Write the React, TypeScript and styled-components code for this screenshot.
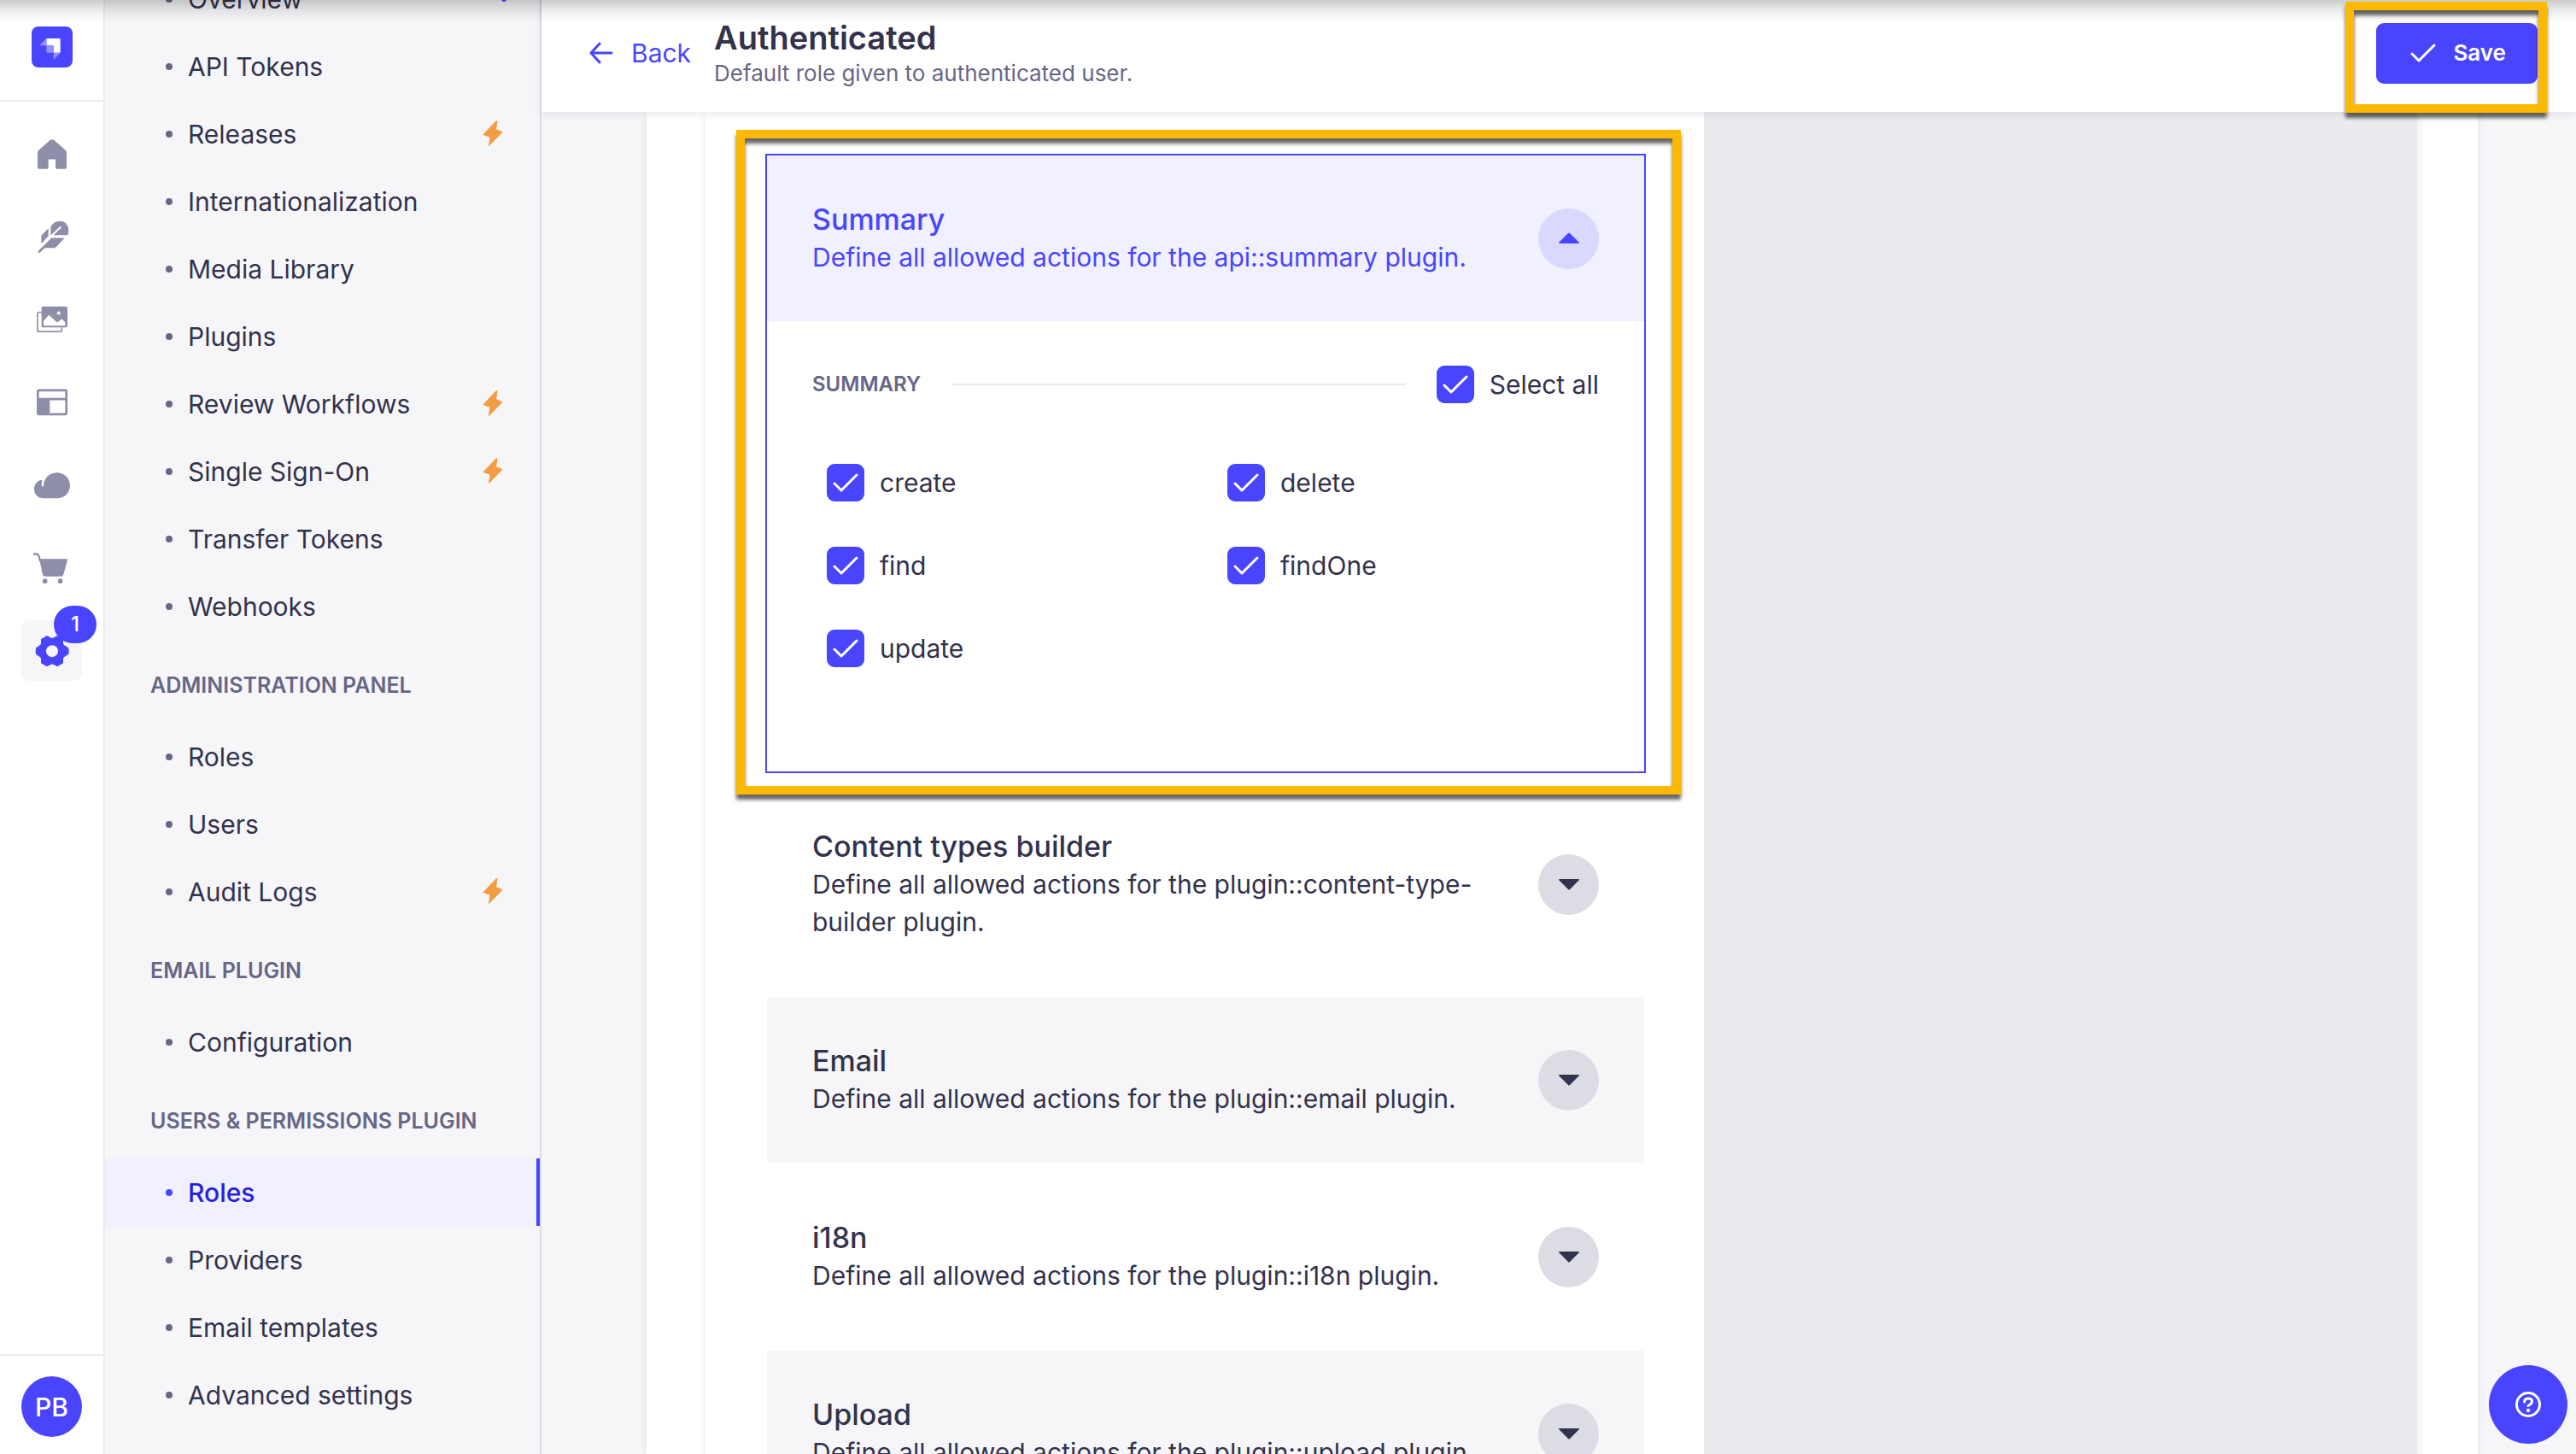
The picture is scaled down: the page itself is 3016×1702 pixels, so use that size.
import React, { useState } from 'react';
import styled, { createGlobalStyle, css } from 'styled-components';

const color = {
  primary: '#4945ff',
  primaryDark: '#271fe0',
  primarySoft: '#f0f0ff',
  primaryMuted: '#d9d8ff',
  ink: '#32324d',
  inkSoft: '#666687',
  icon: '#8e8ea9',
  line: '#eaeaef',
  lineDark: '#dcdce4',
  surface: '#f6f6f9',
  warning: '#f29d41',
  marker: '#fcb900',
};

const GlobalStyle = createGlobalStyle`
  *, *::before, *::after { box-sizing: border-box; }
  body {
    margin: 0;
    background: ${color.surface};
    color: ${color.ink};
    font-family: Inter, "Liberation Sans", sans-serif;
    font-size: 30px;
    line-height: 44px;
  }
  button, input { font: inherit; margin: 0; }
  h1, h2, h3, p, ul { margin: 0; padding: 0; }
  ul { list-style: none; }
  a { color: inherit; text-decoration: none; }
  svg { display: block; flex: none; }
`;

const Shell = styled.div`
  display: flex;
  height: 100vh;
  overflow: hidden;
`;

const TopShade = styled.div`
  position: fixed;
  inset: 0 0 auto 0;
  height: 26px;
  z-index: 1;
  pointer-events: none;
  background: linear-gradient(rgba(0, 0, 0, 0.2), rgba(0, 0, 0, 0.07) 50%, rgba(0, 0, 0, 0));
`;

/* ---------- main rail ---------- */

const Rail = styled.nav`
  display: flex;
  flex-direction: column;
  flex: none;
  width: 123px;
  background: #fff;
  border-right: 2px solid ${color.line};
`;

const RailBrand = styled.div`
  display: flex;
  justify-content: center;
  padding: 31px 0 38px;
  border-bottom: 2px solid ${color.line};
`;

const RailList = styled.ul`
  display: flex;
  flex-direction: column;
  align-items: center;
  gap: 26px;
  flex: 1;
  padding-top: 25px;
`;

const RailLink = styled.a<{ $active?: boolean }>`
  position: relative;
  display: grid;
  place-items: center;
  width: 71px;
  height: 71px;
  border-radius: 9px;
  color: ${(p) => (p.$active ? color.primary : color.icon)};
  --hole: ${(p) => (p.$active ? color.surface : '#fff')};
  background: var(--hole);
`;

const Badge = styled.span`
  position: absolute;
  top: -17px;
  right: -17px;
  width: 50px;
  height: 44px;
  border-radius: 22px;
  background: ${color.primary};
  color: #fff;
  font-size: 24px;
  font-weight: 500;
  text-align: center;
`;

const RailUser = styled.div`
  display: flex;
  justify-content: center;
  padding: 24px 0 20px;
  border-top: 2px solid ${color.line};
`;

const Avatar = styled.button`
  width: 71px;
  height: 71px;
  padding: 0;
  border: 0;
  border-radius: 50%;
  background: ${color.primary};
  color: #fff;
  font-weight: 500;
`;

/* ---------- settings navigation ---------- */

const Side = styled.nav`
  flex: none;
  width: 511px;
  background: ${color.surface};
  border-right: 2px solid ${color.lineDark};
`;

const SideScroll = styled.div`
  margin-top: -41px;
`;

const SideHeading = styled.h2`
  padding: 31px 53px 22px;
  color: ${color.inkSoft};
  font-size: 25px;
  font-weight: 600;
  text-transform: uppercase;
  white-space: nowrap;
`;

const SideLink = styled.a<{ $active?: boolean }>`
  display: flex;
  align-items: center;
  gap: 18px;
  height: 79px;
  padding: 0 43px 0 71px;
  white-space: nowrap;

  &::before {
    content: '';
    width: 8px;
    height: 8px;
    border-radius: 50%;
    background: ${color.inkSoft};
  }

  svg { margin-left: auto; }

  ${(p) =>
    p.$active &&
    css`
      background: ${color.primarySoft};
      color: ${color.primaryDark};
      font-weight: 500;
      border-right: 4px solid ${color.primary};

      &::before { background: ${color.primary}; }
    `}
`;

const Notice = styled.span`
  width: 6px;
  height: 6px;
  margin: 0 -4px 0 auto;
  border-radius: 50%;
  background: ${color.primary};
`;

/* ---------- content ---------- */

const Main = styled.main`
  display: flex;
  flex-direction: column;
  flex: 1;
  min-width: 0;
`;

const Header = styled.header`
  position: relative;
  display: flex;
  align-items: center;
  padding: 20px 45px 27px 56px;
  background: #fff;
  box-shadow: 0 2px 9px rgba(33, 33, 52, 0.1);
`;

const BackLink = styled.a`
  display: flex;
  align-items: center;
  gap: 21px;
  margin-right: 27px;
  color: ${color.primary};
`;

const Heading = styled.div`
  flex: 1;
`;

const Title = styled.h1`
  font-size: 38px;
  line-height: 48px;
  font-weight: 600;
`;

const Subtitle = styled.p`
  color: ${color.inkSoft};
  font-size: 26px;
  line-height: 36px;
`;

const Marked = styled.div`
  position: relative;
`;

const Marker = styled.span<{ $inset: string }>`
  position: absolute;
  inset: ${(p) => p.$inset};
  z-index: 2;
  border: 10px solid ${color.marker};
  filter: drop-shadow(0 6px 2px rgba(0, 0, 0, 0.6));
  pointer-events: none;
`;

const SaveButton = styled.button`
  display: flex;
  align-items: center;
  gap: 20px;
  height: 71px;
  padding: 0 37px 0 40px;
  border: 0;
  border-radius: 9px;
  background: ${color.primary};
  color: #fff;
  font-size: 26px;
  font-weight: 600;
`;

const Body = styled.div`
  display: flex;
  flex: 1;
  min-height: 0;
  overflow: hidden;
  padding: 0 115px 0 123px;
`;

const Sheet = styled.div`
  flex: 1;
  padding: 0 71px 0 69px;
  background: #fff;
  box-shadow: 0 2px 9px rgba(33, 33, 52, 0.1);
`;

const Columns = styled.div`
  display: grid;
  grid-template-columns: 7fr 5fr;
  box-shadow: 0 2px 9px rgba(33, 33, 52, 0.1);
`;

const Permissions = styled.section`
  display: flex;
  flex-direction: column;
  gap: 9px;
  min-width: 0;
  padding: 49px 68px 49px 70px;
`;

const Advanced = styled.aside`
  background: ${color.line};
`;

const Panel = styled.div<{ $open?: boolean }>`
  border: 2px solid ${(p) => (p.$open ? color.primary : 'transparent')};
`;

const PanelToggle = styled.button<{ $open?: boolean; $tinted?: boolean }>`
  display: flex;
  align-items: center;
  justify-content: space-between;
  gap: 53px;
  width: 100%;
  padding: 53px;
  border: 0;
  background: ${(p) => (p.$open ? color.primarySoft : p.$tinted ? color.surface : '#fff')};
  color: ${(p) => (p.$open ? color.primary : color.ink)};
  text-align: left;
`;

const PanelText = styled.span`
  display: flex;
  flex-direction: column;
`;

const PanelTitle = styled.span`
  font-size: 34px;
  font-weight: 500;
`;

const Caret = styled.span<{ $open?: boolean }>`
  display: grid;
  place-items: center;
  flex: none;
  width: 71px;
  height: 71px;
  border-radius: 50%;
  background: ${(p) => (p.$open ? color.primaryMuted : color.lineDark)};
`;

const PanelBody = styled.div`
  display: flex;
  flex-direction: column;
  gap: 71px;
  padding: 52px 53px 122px 53px;
`;

const GroupHead = styled.div`
  display: flex;
  align-items: center;
  gap: 36px;
`;

const GroupTitle = styled.h3`
  color: ${color.inkSoft};
  font-size: 24px;
  font-weight: 600;
  text-transform: uppercase;
`;

const Rule = styled.span`
  flex: 1;
  height: 2px;
  background: ${color.line};
`;

const Actions = styled.div`
  display: grid;
  grid-template-columns: 1fr 1fr;
  column-gap: 17px;
  row-gap: 53px;
  padding-left: 17px;
  margin-right: -17px;
`;

const CheckLabel = styled.label`
  display: flex;
  align-items: center;
  gap: 18px;
`;

const CheckFrame = styled.span`
  display: grid;
  width: 44px;
  height: 44px;

  input, svg { grid-area: 1 / 1; }
  svg { place-self: center; pointer-events: none; color: #fff; }
`;

const CheckInput = styled.input`
  appearance: none;
  width: 44px;
  height: 44px;
  border: 2px solid #c0c0cf;
  border-radius: 9px;
  background: #fff;

  &:checked {
    border-color: ${color.primary};
    background: ${color.primary};
  }
`;

const HelpButton = styled.button`
  position: fixed;
  right: 10px;
  bottom: 12px;
  display: grid;
  place-items: center;
  width: 92px;
  height: 92px;
  padding: 0;
  border: 0;
  border-radius: 50%;
  background: ${color.primary};
  color: #fff;
`;

/* ---------- drawings ---------- */

const Logo = () => (
  <svg width="48" height="48" viewBox="52 33 144 144" role="img" aria-label="Strapi">
    <rect x="52" y="33" width="144" height="144" rx="24" fill={color.primary} />
    <path d="M104 75H150Q153 75 153 78V125H129V100H104Z" fill="#fff" />
    <path d="M104 75V100H79ZM104 100H129V125H107Q104 125 104 122ZM129 125H153L129 150Z" fill="#9593ff" />
  </svg>
);

const RailIcon = ({ cy, children }: { cy: number; children: React.ReactNode }) => (
  <svg width="44" height="44" viewBox={`57 ${cy - 65} 132 132`} fill="currentColor" aria-hidden="true">
    {children}
  </svg>
);

const HomeIcon = () => (
  <RailIcon cy={478.5}>
    <path d="M117 431Q123 427 129 431L170 467Q174 471 174 476V527Q174 533 168 533H141Q135 533 135 527V499H110V527Q110 533 104 533H78Q72 533 72 527V476Q72 471 76 467Z" />
  </RailIcon>
);

const FeatherIcon = () => (
  <RailIcon cy={769.5}>
    <path d="M85 767L110 741V768L85 795Z" />
    <path d="M118 735C128 722 138 716 150 716C168 716 181 730 181 748Q181 758 178 765H118Z" />
    <path d="M112 776L152 738" stroke="#fff" strokeWidth="6" strokeLinecap="round" />
    <path d="M121 775H167L137 807Q134 810 130 810H97L81 826Q77 829 74 825Q73 822 76 819Z" />
  </RailIcon>
);

const PicturesIcon = () => (
  <RailIcon cy={1060.5}>
    <path d="M87 1036H77Q71.500 1036 71.500 1042V1098Q71.500 1104 77 1104H152Q157 1104 157 1099V1089" fill="none" stroke="currentColor" strokeWidth="5" />
    <rect x="86" y="1016" width="91" height="73" rx="5" />
    <path d="M93 1066L112 1046L141 1072L157 1059L169 1071V1083H93Z" fill="#fff" />
    <circle cx="146" cy="1039" r="6" fill="#fff" />
  </RailIcon>
);

const LayoutIcon = () => (
  <RailIcon cy={91.5}>
    <rect x="69" y="46" width="108" height="92" rx="7" />
    <path d="M77 54H169V77H77ZM115 85H169V130H115Z" fill="#fff" />
  </RailIcon>
);

const CloudIcon = () => (
  <RailIcon cy={382.5}>
    <path d="M93 429C74 429 60 416 60 396C60 378 74 365 89 365C87 372 86 378 86 384Q86 388 89.500 388T93 384C94 358 114 339 140 339C166 339 186 359 186 384C186 409 167 429 141 429Z" />
  </RailIcon>
);

const CartIcon = () => (
  <RailIcon cy={673.5}>
    <path d="M60 625H67Q74 625 76 631L81 649" fill="none" stroke="currentColor" strokeWidth="7" strokeLinecap="round" />
    <path d="M78 642H174Q178 642 177 646L163 697Q161 704 154 704H99Q92 704 90 698Z" />
    <circle cx="98" cy="720" r="8.500" />
    <circle cx="152" cy="720" r="8.500" />
  </RailIcon>
);

const GearIcon = () => (
  <RailIcon cy={964.5}>
    <path
      d="M105 914L118 921Q123 923 128 921L141 914L160 925V938Q160 944 165 947L179 956Q181 966 179 976L165 985Q160 988 160 994V1007L141 1018L128 1011Q123 1009 118 1011L105 1018L86 1007V994Q86 988 81 985L68 976Q66 966 68 956L81 947Q86 944 86 938V925Z"
      stroke="currentColor"
      strokeWidth="4"
      strokeLinejoin="round"
    />
    <circle cx="123" cy="966" r="21" fill="var(--hole)" />
  </RailIcon>
);

const Bolt = () => (
  <svg width="24" height="32" viewBox="0 0 24 32" fill={color.warning} stroke={color.warning} strokeWidth="1" strokeLinejoin="round" aria-label="Paid feature">
    <path d="M16 0.500L1 16.500L9 19.500L7.500 29.500L23 13.500L15.500 10.500L17 1Z" />
  </svg>
);

const ArrowLeft = () => (
  <svg width="28" height="26" viewBox="0 0 28 26" fill="none" stroke="currentColor" strokeWidth="3" strokeLinecap="round" strokeLinejoin="round" aria-hidden="true">
    <path d="M26 13H2M12 2L2 13L12 24" />
  </svg>
);

const CheckMark = () => (
  <svg width="30" height="22" viewBox="0 0 30 22" fill="none" stroke="currentColor" strokeWidth="3" strokeLinecap="round" strokeLinejoin="round" aria-hidden="true">
    <path d="M2 12L10 20L28 2" />
  </svg>
);

const Triangle = ({ up }: { up?: boolean }) => (
  <svg width="24" height="14" viewBox="0 0 24 14" fill="currentColor" aria-hidden="true">
    <path d={up ? 'M11 1Q12 0 13 1L24 12Q24 13 23 13H1Q0 13 0 12Z' : 'M11 13Q12 14 13 13L24 2Q24 1 23 1H1Q0 1 0 2Z'} />
  </svg>
);

const QuestionIcon = () => (
  <svg width="32" height="32" viewBox="0 0 32 32" fill="none" stroke="currentColor" strokeWidth="3" strokeLinecap="round" aria-hidden="true">
    <circle cx="16" cy="16" r="13.500" />
    <path d="M11.500 13Q12 9 16 9Q20.500 9 20.500 12.500Q20.500 15 16 17.500" />
    <circle cx="16" cy="23" r="2.200" fill="currentColor" stroke="none" />
  </svg>
);

/* ---------- data ---------- */

type NavEntry = { label: string; bolt?: boolean; notice?: boolean; active?: boolean };

const navSections: { title?: string; items: NavEntry[] }[] = [
  {
    items: [
      { label: 'Overview', notice: true },
      { label: 'API Tokens' },
      { label: 'Releases', bolt: true },
      { label: 'Internationalization' },
      { label: 'Media Library' },
      { label: 'Plugins' },
      { label: 'Review Workflows', bolt: true },
      { label: 'Single Sign-On', bolt: true },
      { label: 'Transfer Tokens' },
      { label: 'Webhooks' },
    ],
  },
  { title: 'Administration panel', items: [{ label: 'Roles' }, { label: 'Users' }, { label: 'Audit Logs', bolt: true }] },
  { title: 'Email plugin', items: [{ label: 'Configuration' }] },
  {
    title: 'Users & Permissions plugin',
    items: [{ label: 'Roles', active: true }, { label: 'Providers' }, { label: 'Email templates' }, { label: 'Advanced settings' }],
  },
];

const railItems = [
  { label: 'Home', Icon: HomeIcon },
  { label: 'Content Manager', Icon: FeatherIcon },
  { label: 'Media Library', Icon: PicturesIcon },
  { label: 'Content-Type Builder', Icon: LayoutIcon },
  { label: 'Deploy', Icon: CloudIcon },
  { label: 'Marketplace', Icon: CartIcon },
  { label: 'Settings', Icon: GearIcon, badge: 1 },
];

const actionNames = ['create', 'delete', 'find', 'findOne', 'update'];

const closedPanels = [
  { title: 'Content types builder', target: 'plugin::content-type-builder' },
  { title: 'Email', target: 'plugin::email', tinted: true },
  { title: 'i18n', target: 'plugin::i18n' },
  { title: 'Upload', target: 'plugin::upload', tinted: true },
];

/* ---------- parts ---------- */

type CheckProps = { label: string; checked: boolean; onChange: (next: boolean) => void };

const Check = ({ label, checked, onChange }: CheckProps) => (
  <CheckLabel>
    <CheckFrame>
      <CheckInput type="checkbox" checked={checked} onChange={(e) => onChange(e.target.checked)} />
      <CheckMark />
    </CheckFrame>
    {label}
  </CheckLabel>
);

type PanelHeadProps = { title: string; target: string; open?: boolean; tinted?: boolean };

const PanelHead = ({ title, target, open, tinted }: PanelHeadProps) => (
  <PanelToggle type="button" aria-expanded={!!open} $open={open} $tinted={tinted}>
    <PanelText>
      <PanelTitle>{title}</PanelTitle>
      <span>Define all allowed actions for the {target} plugin.</span>
    </PanelText>
    <Caret $open={open}>
      <Triangle up={open} />
    </Caret>
  </PanelToggle>
);

export default function App() {
  const [granted, setGranted] = useState<string[]>(actionNames);
  const toggle = (name: string, on: boolean) =>
    setGranted((list) => (on ? [...list, name] : list.filter((n) => n !== name)));

  return (
    <>
      <GlobalStyle />
      <Shell>
        <Rail aria-label="Main">
          <RailBrand>
            <Logo />
          </RailBrand>
          <RailList>
            {railItems.map(({ label, Icon, badge }) => (
              <li key={label}>
                <RailLink href="#" aria-label={label} $active={!!badge}>
                  <Icon />
                  {badge && <Badge>{badge}</Badge>}
                </RailLink>
              </li>
            ))}
          </RailList>
          <RailUser>
            <Avatar type="button">PB</Avatar>
          </RailUser>
        </Rail>

        <Side aria-label="Settings">
          <SideScroll>
            {navSections.map((section, i) => (
              <section key={i}>
                {section.title && <SideHeading>{section.title}</SideHeading>}
                <ul>
                  {section.items.map((item) => (
                    <li key={item.label}>
                      <SideLink href="#" $active={item.active}>
                        {item.label}
                        {item.bolt && <Bolt />}
                        {item.notice && <Notice />}
                      </SideLink>
                    </li>
                  ))}
                </ul>
              </section>
            ))}
          </SideScroll>
        </Side>

        <Main>
          <Header>
            <BackLink href="#">
              <ArrowLeft />
              Back
            </BackLink>
            <Heading>
              <Title>Authenticated</Title>
              <Subtitle>Default role given to authenticated user.</Subtitle>
            </Heading>
            <Marked>
              <SaveButton type="submit">
                <CheckMark />
                Save
              </SaveButton>
              <Marker $inset="-25px -11px -34px -36px" />
            </Marked>
          </Header>

          <Body>
            <Sheet>
              <Columns>
                <Permissions>
                  <Marked>
                    <Panel $open>
                      <PanelHead title="Summary" target="api::summary" open />
                      <PanelBody>
                        <GroupHead>
                          <GroupTitle>Summary</GroupTitle>
                          <Rule />
                          <Check
                            label="Select all"
                            checked={granted.length === actionNames.length}
                            onChange={(on) => setGranted(on ? actionNames : [])}
                          />
                        </GroupHead>
                        <Actions>
                          {actionNames.map((name) => (
                            <Check
                              key={name}
                              label={name}
                              checked={granted.includes(name)}
                              onChange={(on) => toggle(name, on)}
                            />
                          ))}
                        </Actions>
                      </PanelBody>
                    </Panel>
                    <Marker $inset="-28px -41px -25px -34px" />
                  </Marked>
                  {closedPanels.map((panel) => (
                    <Panel key={panel.title}>
                      <PanelHead {...panel} />
                    </Panel>
                  ))}
                </Permissions>
                <Advanced />
              </Columns>
            </Sheet>
          </Body>
        </Main>
      </Shell>
      <TopShade />
      <HelpButton type="button" aria-label="Help">
        <QuestionIcon />
      </HelpButton>
    </>
  );
}
